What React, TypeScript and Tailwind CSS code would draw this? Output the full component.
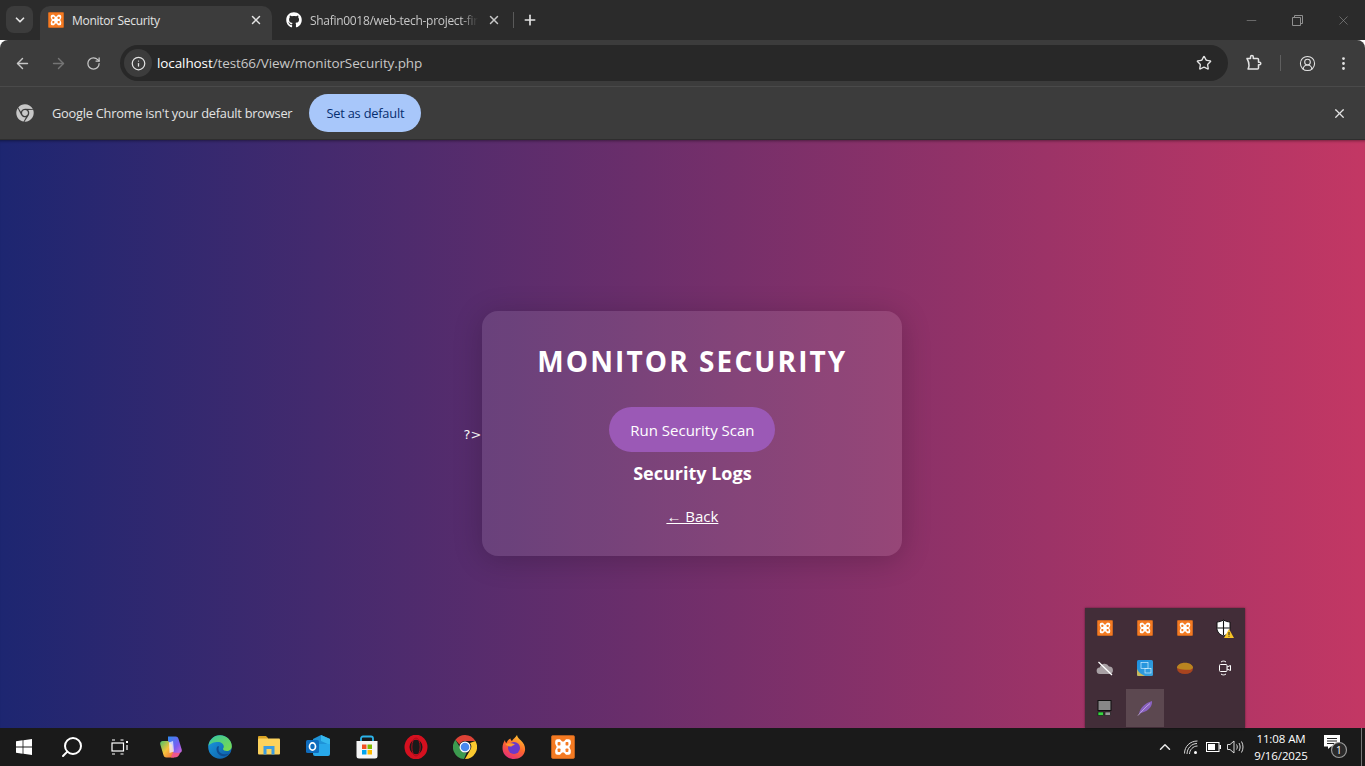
import { ArrowLeft, ArrowRight, RotateCw, Info, Star, CircleUserRound, EllipsisVertical, X, Plus, ChevronDown, ChevronUp, Minus, Search } from 'lucide-react';
import { FaGithub, FaChrome } from 'react-icons/fa';

const XamppIcon = ({ size = 16 }: { size?: number }) => (
  <svg width={size} height={size} viewBox="0 0 16 16">
    <rect x="0.250" y="0.250" width="15.500" height="15.500" rx="1.200" fill="#f47a22" stroke="#c9651f" strokeWidth="0.500" />
    <path d="M2.800 4.300Q2.800 2.800 4.300 2.800H6L7.400 4.400H8.600L10 2.800H11.700Q13.200 2.800 13.200 4.300V5.800L12.200 8L13.200 10.200V11.700Q13.200 13.200 11.700 13.200H10L8.600 11.600H7.400L6 13.200H4.300Q2.800 13.200 2.800 11.700V10.200L3.800 8L2.800 5.800Z" fill="#fff" />
    <rect x="4.400" y="4.700" width="1.900" height="2.300" rx="0.500" fill="#f47a22" />
    <rect x="9.700" y="4.700" width="1.900" height="2.300" rx="0.500" fill="#f47a22" />
    <rect x="4.400" y="9" width="1.900" height="2.300" rx="0.500" fill="#f47a22" />
    <rect x="9.700" y="9" width="1.900" height="2.300" rx="0.500" fill="#f47a22" />
  </svg>
);

const WinLogo = () => (
  <svg width="16" height="16" viewBox="0 0 16 16" fill="#fff">
    <path d="M0 2.200 6.600 1.300V7.600H0zM7.400 1.200 16 0V7.600H7.400zM0 8.400h6.600v6.300L0 13.800zM7.400 8.400H16V16l-8.600-1.200z" />
  </svg>
);

const TaskView = () => (
  <svg width="18" height="16" viewBox="0 0 18 16" fill="none" stroke="#fff" strokeWidth="1.200">
    <rect x="1" y="4" width="11.500" height="8" />
    <path d="M1 1h3M9.500 1h3M1 15h3M9.500 15h3" />
    <rect x="15" y="2" width="2" height="2" fill="#fff" stroke="none" />
    <rect x="15.400" y="6" width="1.200" height="5" fill="#fff" stroke="none" />
  </svg>
);

const ExtensionIcon = () => (
  <svg width="18" height="18" viewBox="0 0 18 18" fill="none" stroke="#e3e3e3" strokeWidth="1.500" strokeLinejoin="round">
    <path d="M2 4.500h3.500V3a1.400 1.400 0 0 1 2.800 0v1.500h4.200a1 1 0 0 1 1 1v2.700h1a1.300 1.300 0 0 1 0 2.600h-1v3.200a1 1 0 0 1-1 1H3c.8-1.400 1-2.500 1-3.500S3.500 7 2 4.500z" />
  </svg>
);

const Copilot = () => (
  <svg width="24" height="24" viewBox="0 0 24 24">
    <defs>
      <linearGradient id="cpa" x1="0" y1="0" x2="1" y2="1">
        <stop offset="0" stopColor="#2f8cf0" />
        <stop offset="0.600" stopColor="#7a5cf0" />
        <stop offset="1" stopColor="#d66ad8" />
      </linearGradient>
      <linearGradient id="cpb" x1="0" y1="0" x2="1" y2="1">
        <stop offset="0" stopColor="#46c46a" />
        <stop offset="0.500" stopColor="#f6c33c" />
        <stop offset="1" stopColor="#f0623c" />
      </linearGradient>
    </defs>
    <path d="M9 1.500h7.500c2 0 2.700 1.300 3.200 3l3 10c.6 2-.8 3.500-2.500 3.500h-6L9 10.500z" fill="url(#cpa)" />
    <path d="M15 22.500H7.500c-2 0-2.700-1.300-3.200-3l-3-10C.7 7.500 2.100 6 3.800 6H9l4 4z" fill="url(#cpb)" />
    <path d="M10 7.500 14 6l1 10.500-4.500 1.500z" fill="#f4f0ff" opacity="0.750" />
    <path d="M14 17.500 21 18c-1 3-2.500 4.500-6 4.500h-3z" fill="#f0568c" />
  </svg>
);

const Edge = () => (
  <svg width="24" height="24" viewBox="0 0 24 24">
    <defs>
      <linearGradient id="eda" x1="0" y1="0" x2="1" y2="1">
        <stop offset="0" stopColor="#36c7a0" />
        <stop offset="1" stopColor="#7fdc4a" />
      </linearGradient>
      <linearGradient id="edb" x1="0" y1="0" x2="1" y2="1">
        <stop offset="0" stopColor="#1b9de2" />
        <stop offset="1" stopColor="#0c59a4" />
      </linearGradient>
    </defs>
    <circle cx="12" cy="12" r="11.800" fill="url(#edb)" />
    <path d="M.5 11C1 5 6 .2 12 .2c6.500 0 11.800 5 11.800 11 0 3-2.300 4.800-5 4.800-2 0-3.800-.8-3.800-2 0-.6.800-.9.800-2.500C15.800 9 13 7 10 7 6 7 2 8.500.5 11z" fill="url(#eda)" />
    <path d="M9 12c-1.500 3 .5 8 5 9 2 .4 5 0 7-2.500-2 1-6 1.200-8.500-.5C10.500 16.500 10 14 11 11.500 10 11 9.400 11.300 9 12z" fill="#0f4d92" />
  </svg>
);

const Folder = () => (
  <svg width="22" height="20" viewBox="0 0 22 20">
    <path d="M0 2a1 1 0 0 1 1-1h7l2 2v2H0z" fill="#d9a324" />
    <rect y="3.500" width="22" height="16" rx="1" fill="#fcd25c" />
    <path d="M5.500 11h11v8.500h-3V14h-5v5.500h-3z" fill="#3b9ce0" />
  </svg>
);

const Outlook = () => (
  <svg width="24" height="22" viewBox="0 0 24 22">
    <path d="M7 4 15 0l9 4v12H7z" fill="#1f93d8" />
    <path d="M15 0l9 4v6l-9-4z" fill="#35b8ee" />
    <path d="M7 9h17v10a2 2 0 0 1-2 2H9a2 2 0 0 1-2-2z" fill="#28a8ea" />
    <rect y="5" width="13" height="13" rx="1.500" fill="#0f6cbd" />
    <ellipse cx="6.500" cy="11.500" rx="3" ry="3.600" fill="none" stroke="#fff" strokeWidth="1.700" />
  </svg>
);

const Store = () => (
  <svg width="24" height="24" viewBox="0 0 24 24">
    <path d="M6 7V3.500A2 2 0 0 1 8 1.500h8a2 2 0 0 1 2 2V7" fill="none" stroke="#2cb4ea" strokeWidth="1.800" />
    <path d="M1.500 6h21v15a2.500 2.500 0 0 1-2.500 2.500H4A2.500 2.500 0 0 1 1.500 21z" fill="#f5f5f5" />
    <rect x="7" y="9.500" width="4.500" height="4.500" fill="#f25022" />
    <rect x="12.500" y="9.500" width="4.500" height="4.500" fill="#7fba00" />
    <rect x="7" y="15" width="4.500" height="4.500" fill="#00a4ef" />
    <rect x="12.500" y="15" width="4.500" height="4.500" fill="#ffb900" />
  </svg>
);

const Opera = () => (
  <svg width="24" height="24" viewBox="0 0 24 24">
    <ellipse cx="12" cy="12" rx="9" ry="9.800" fill="none" stroke="#d5101f" strokeWidth="5" />
    <ellipse cx="12" cy="12" rx="4.200" ry="9" fill="none" stroke="#a80d1a" strokeWidth="1" />
  </svg>
);

const Chrome = ({ size = 24 }: { size?: number }) => (
  <svg width={size} height={size} viewBox="0 0 24 24">
    <path d="M12 0a12 12 0 0 1 10.400 6H12a6 6 0 0 0-5.500 3.500L2.400 4.800A12 12 0 0 1 12 0z" fill="#dd4236" />
    <path d="M22.400 6A12 12 0 0 1 12 24l5.200-9A6 6 0 0 0 17 8z" fill="#fbc92f" />
    <path d="M2.400 4.800 7 12.500a6 6 0 0 0 6.500 5.300L11 24A12 12 0 0 1 2.400 4.800z" fill="#3c9a4f" />
    <circle cx="12" cy="12" r="5.500" fill="#fff" />
    <circle cx="12" cy="12" r="4.300" fill="#4889ee" />
  </svg>
);

const Firefox = () => (
  <svg width="24" height="24" viewBox="0 0 24 24">
    <defs>
      <linearGradient id="ffa" x1="0.700" y1="0" x2="0.200" y2="1">
        <stop offset="0" stopColor="#ffc530" />
        <stop offset="0.450" stopColor="#ff6a2b" />
        <stop offset="1" stopColor="#e3287e" />
      </linearGradient>
    </defs>
    <path d="M15 0c.5 2.500 2 3.500 4 5.500 3 3 4.500 6 4 10-.7 5-5.500 8.500-11 8.500C5.500 24 .5 19.500.5 13c0-3 1-6 2.500-8 .1 1.500.5 2.500 1.500 3 .7-2 2-3.500 4-4.500 0 1 .5 2 1.500 2.500C11 4 13.500 2.500 15 0z" fill="url(#ffa)" />
    <circle cx="12" cy="13" r="6" fill="#6b39c9" />
    <path d="M3.500 9.500c3-2 7-1.500 9.500 0-1.500.7-2.500 1-3.500 2-2 0-4.500-.5-6-2z" fill="#ff9c2b" />
  </svg>
);

const TrayShield = () => (
  <svg width="18" height="19" viewBox="0 0 18 19">
    <path d="M7.500 1c2.200 1.300 4.100 1.800 6.500 2v6.500c0 3.500-2.800 6.200-6.500 7.500C3.800 15.700 1 13 1 9.500V3c2.400-.2 4.300-.7 6.500-2z" fill="#fff" stroke="#111" strokeWidth="1" />
    <path d="M7.500 1.500V16.500M1.300 9h12.400" stroke="#111" strokeWidth="1.100" />
    <path d="M13 10l5 9H8z" fill="#f7c325" />
    <rect x="12.500" y="13" width="1" height="3" fill="#222" />
    <rect x="12.500" y="16.700" width="1" height="1" fill="#222" />
  </svg>
);

const TrayCloud = () => (
  <svg width="18" height="15" viewBox="0 0 18 15">
    <path d="M4 13a3.200 3.200 0 0 1-.3-6.400A5 5 0 0 1 13 5.500 3.800 3.800 0 0 1 14 13z" fill="#a8a0a4" />
    <path d="M2.500 1 16 14" stroke="#fff" strokeWidth="1.300" />
  </svg>
);

const TrayIntel = () => (
  <svg width="16" height="16" viewBox="0 0 16 16">
    <defs>
      <linearGradient id="intel" x1="0" y1="0" x2="1" y2="1">
        <stop offset="0" stopColor="#1b8fe0" />
        <stop offset="1" stopColor="#3aa2dc" />
      </linearGradient>
    </defs>
    <rect width="16" height="16" rx="1.500" fill="url(#intel)" />
    <path d="M0 9c1 3 4 5 8 7H1.500A1.500 1.500 0 0 1 0 14.500z" fill="#c9b85a" />
    <rect x="4" y="2.500" width="7" height="6" fill="none" stroke="#cfeeff" strokeWidth="0.700" />
    <rect x="8" y="8.500" width="6" height="4.500" fill="none" stroke="#cfeeff" strokeWidth="0.700" />
  </svg>
);

const TrayDisk = () => (
  <svg width="16" height="12" viewBox="0 0 16 12">
    <ellipse cx="8" cy="6.500" rx="8" ry="5.500" fill="#a8441f" />
    <path d="M0 6C0 3 3.500.8 8 .8S16 3 16 6c-1.500 1.500-3 2-5 1.800C8 7.500 3 7.800 0 6z" fill="#b98420" />
  </svg>
);

const TrayCamera = () => (
  <svg width="12" height="16" viewBox="0 0 12 16" fill="none" stroke="#fff" strokeWidth="1">
    <path d="M2 2C3.500 .8 5.500 .8 7 2M2 14c1.500 1.200 3.500 1.200 5 0" />
    <rect x="0.500" y="4.500" width="7.500" height="7" rx="1" />
    <path d="M8 7l3.500-1.500v5L8 9" />
  </svg>
);

const TrayNet = () => (
  <svg width="16" height="16" viewBox="0 0 16 16">
    <rect x="1" y="0.500" width="13" height="10" fill="#888" stroke="#111" />
    <rect x="1" y="12" width="5.500" height="3.500" fill="#36d640" stroke="#111" strokeWidth="0.600" />
    <rect x="8" y="12" width="5.500" height="3.500" fill="#999" stroke="#111" strokeWidth="0.600" />
  </svg>
);

const TrayFeather = () => (
  <svg width="16" height="16" viewBox="0 0 16 16">
    <path d="M15 1c.5 4-2 8.500-7 10.500C5.500 12.500 3.500 13 2 14 3 8 8 3 15 1z" fill="#8a62c0" />
    <path d="M1 15.500C5 11 9 6.500 13 3.500" stroke="#c9b3e8" strokeWidth="0.800" fill="none" />
  </svg>
);

const WifiIcon = () => (
  <svg width="15" height="15" viewBox="0 0 15 15" fill="none" stroke="#d8d8d8" strokeWidth="1">
    <path d="M.5 13.500C.5 6.500 6 1 13.500 1M3 14c0-5.500 4.500-10.500 10-10.500M5.500 14c0-4 3.500-8 8-8" />
    <circle cx="11.500" cy="12.500" r="1.500" fill="#fff" stroke="none" />
  </svg>
);

const BatteryIcon = () => (
  <svg width="15" height="10" viewBox="0 0 15 10">
    <rect x="0.500" y="0.500" width="12.500" height="9" fill="none" stroke="#fff" />
    <rect x="2" y="2" width="7" height="6" fill="#fff" />
    <rect x="13.500" y="3" width="1.500" height="4" fill="#fff" />
  </svg>
);

const VolumeIcon = () => (
  <svg width="17" height="14" viewBox="0 0 17 14" fill="none" stroke="#d8d8d8" strokeWidth="1">
    <path d="M.5 4.500H3L7 1v12L3 9.500H.5z" />
    <path d="M9.500 4.500c1 1.500 1 3.500 0 5M12 3c1.500 2.500 1.500 5.500 0 8M14.500 1.500c2 3.500 2 7.500 0 11" />
  </svg>
);

const Notification = () => (
  <svg width="26" height="26" viewBox="0 0 26 26">
    <path d="M0 1h16v11.500H7L4 15v-2.500H0z" fill="#fff" />
    <path d="M3 4.500h10M3 7h10M3 9.500h7" stroke="#222" strokeWidth="1" />
    <circle cx="15" cy="16" r="7.500" fill="#2a2a2a" stroke="#9a9a9a" strokeWidth="1.200" />
  </svg>
);

const taskbarApps = [
  <Copilot key="copilot" />,
  <Edge key="edge" />,
  <Folder key="folder" />,
  <Outlook key="outlook" />,
  <Store key="store" />,
  <Opera key="opera" />,
  <Chrome key="chrome" />,
  <Firefox key="firefox" />,
  <XamppIcon key="xampp" size={24} />,
];

const trayIcons = [
  <XamppIcon key="x1" />,
  <XamppIcon key="x2" />,
  <XamppIcon key="x3" />,
  <TrayShield key="shield" />,
  <TrayCloud key="cloud" />,
  <TrayIntel key="intel" />,
  <TrayDisk key="disk" />,
  <TrayCamera key="camera" />,
  <TrayNet key="net" />,
  <TrayFeather key="feather" />,
];

export default function App() {
  return (
    <div className="flex h-[766px] w-[1365px] flex-col overflow-hidden font-['Open_Sans',sans-serif]">
      {/* tabs */}
      <div className="flex h-10 shrink-0 items-end bg-[#2b2b2b] pl-1.5">
        <div className="mb-[7px] flex h-[27px] w-[27px] items-center justify-center rounded-lg bg-[#3c3c3c] text-[#e3e3e3]">
          <ChevronDown size={14} strokeWidth={3} />
        </div>
        <div className="ml-[7px] flex h-[34px] w-[232px] items-center rounded-t-[10px] bg-[#3c3c3c] pb-[6px] pl-2 pr-[9px]">
          <XamppIcon />
          <span className="ml-2 mt-px flex-1 text-[12px] tracking-[-0.3px] text-[#e3e3e3]">Monitor Security</span>
          <X size={14} strokeWidth={2.5} className="text-[#e3e3e3]" />
        </div>
        <div className="flex h-[34px] w-[241px] items-center pb-[6px] pl-3.5 pr-[12px]">
          <FaGithub size={16} className="text-white" />
          <span className="ml-2 mt-px w-[168px] overflow-hidden whitespace-nowrap text-[12px] tracking-[-0.3px] text-[#c7c7c7] [mask-image:linear-gradient(to_right,black_90%,transparent)]">Shafin0018/web-tech-project-final</span>
          <span className="flex-1" />
          <X size={14} strokeWidth={2.5} className="text-[#c7c7c7]" />
        </div>
        <div className="mb-[12px] h-4 w-px bg-[#5a5a5a]" />
        <Plus size={16} strokeWidth={2.5} className="mb-[12px] ml-[8px] text-[#e3e3e3]" />
        <div className="flex-1" />
        <div className="mb-[12px] flex items-center gap-[33px] pr-[14px] text-[#8f8f8f]">
          <Minus size={15} strokeWidth={1} />
          <svg width="11" height="11" viewBox="0 0 11 11" fill="none" stroke="currentColor">
            <path d="M.5 2.500h8v8h-8zM2.500 2.500v-2h8v8h-2" />
          </svg>
          <X size={15} strokeWidth={1} />
        </div>
      </div>
      {/* toolbar */}
      <div className="flex h-[47px] shrink-0 items-center rounded-t-lg border-b border-[#4a4a4a] bg-[#3c3c3c] pl-3.5 pr-3">
        <ArrowLeft size={17} className="text-[#c7c7c7]" />
        <ArrowRight size={17} className="ml-[19px] text-[#757575]" />
        <RotateCw size={15} className="ml-[19px] text-[#c7c7c7]" />
        <div className="ml-[19px] flex h-9 w-[1108px] items-center rounded-full bg-[#282828] pl-1">
          <div className="flex h-7 w-7 items-center justify-center rounded-full bg-[#3c3c3c]">
            <Info size={15} className="text-[#e3e3e3]" />
          </div>
          <span className="ml-[5px] flex-1 text-[13.500px] tracking-[-0.1px] text-[#c7c7c7]"><span className="text-white">localhost</span>/test66/View/monitorSecurity.php</span>
          <Star size={16} className="mr-4 text-[#e3e3e3]" />
        </div>
        <div className="ml-[17px]"><ExtensionIcon /></div>
        <div className="ml-[17px] h-4 w-px bg-[#5f5f5f]" />
        <CircleUserRound size={17} strokeWidth={1.5} className="ml-[18px] text-[#e3e3e3]" />
        <EllipsisVertical size={17} className="ml-[19px] text-[#e3e3e3]" />
      </div>
      {/* infobar */}
      <div className="flex h-[53px] shrink-0 items-center border-b border-[#2e2e2e] bg-[#3c3c3c] pl-4 pr-[18px]">
        <FaChrome size={18} className="text-[#c7c7c7]" />
        <span className="ml-[18px] mt-px text-[12.800px] tracking-[-0.23px] text-[#e3e3e3]">Google Chrome isn't your default browser</span>
        <div className="ml-[17px] flex h-[38px] w-28 items-center justify-center rounded-full bg-[#a8c7fa] pt-px text-[12.800px] font-medium tracking-[-0.2px] text-[#062e6f]">Set as default</div>
        <div className="flex-1" />
        <X size={15} strokeWidth={2} className="text-[#e3e3e3]" />
      </div>
      {/* page */}
      <div className="relative flex flex-1 items-center justify-center bg-[linear-gradient(to_right,#1d2671,#c33764)] pb-px pl-px shadow-[inset_0_3px_3px_-2px_rgba(0,0,0,0.4)]">
        <span className="mr-px mt-[3px] text-[13px] text-white font-['DejaVu_Sans',sans-serif]">?&gt;</span>
        <div className="flex h-[245px] w-[420px] flex-col items-center rounded-2xl bg-white/10 pt-[27px] text-white shadow-[0_4px_30px_rgba(0,0,0,0.2)]">
          <h1 className="text-[28px] font-bold leading-[46px] tracking-[2.100px]">MONITOR SECURITY</h1>
          <button className="mt-[23px] flex h-[45px] w-[166px] items-center justify-center rounded-[25px] bg-[#9b59b6] pt-px text-[15px]">Run Security Scan</button>
          <h3 className="mt-[7px] text-[18px] font-bold leading-[28px]">Security Logs</h3>
          <a className="mt-[18px] text-[15px] underline">← Back</a>
        </div>
        {/* tray popup */}
        <div className="absolute bottom-0 right-[120px] grid h-[120px] w-40 grid-cols-4 grid-rows-3 bg-[#422d38] shadow-[0_0_2px_rgba(0,0,0,0.5)]">
          {trayIcons.map((icon, i) => (
            <div key={i} className="flex items-center justify-center">
              {i === 9 ? <div className="flex h-[38px] w-[38px] items-center justify-center bg-[#5c4850]">{icon}</div> : icon}
            </div>
          ))}
        </div>
      </div>
      {/* taskbar */}
      <div className="flex h-[38px] shrink-0 items-center bg-[#1a1a1a]">
        <div className="flex w-12 justify-center"><WinLogo /></div>
        <div className="flex w-12 justify-center"><Search size={24} strokeWidth={2} className="-scale-x-100 text-white" /></div>
        <div className="flex w-12 justify-center"><TaskView /></div>
        <div className="ml-[2px] flex">
          {taskbarApps.map((icon, i) => (
            <div key={i} className="flex w-[49px] justify-center">{icon}</div>
          ))}
        </div>
        <div className="flex-1" />
        <ChevronUp size={18} className="text-[#e8e8e8]" />
        <div className="ml-[10px]"><WifiIcon /></div>
        <div className="ml-[7px]"><BatteryIcon /></div>
        <div className="ml-[6px]"><VolumeIcon /></div>
        <div className="ml-[8px] flex w-[58px] flex-col items-center text-[11.500px] leading-[17px] tracking-[-0.1px] text-white">
          <span>11:08 AM</span>
          <span>9/16/2025</span>
        </div>
        <div className="relative ml-[14px] mr-[11px] flex items-center">
          <Notification />
          <span className="absolute left-[12px] top-[9px] w-[6px] text-[10px] leading-[14px] text-white">1</span>
        </div>
        <div className="mr-[3px] h-full w-px bg-[#777]" />
      </div>
    </div>
  );
}
